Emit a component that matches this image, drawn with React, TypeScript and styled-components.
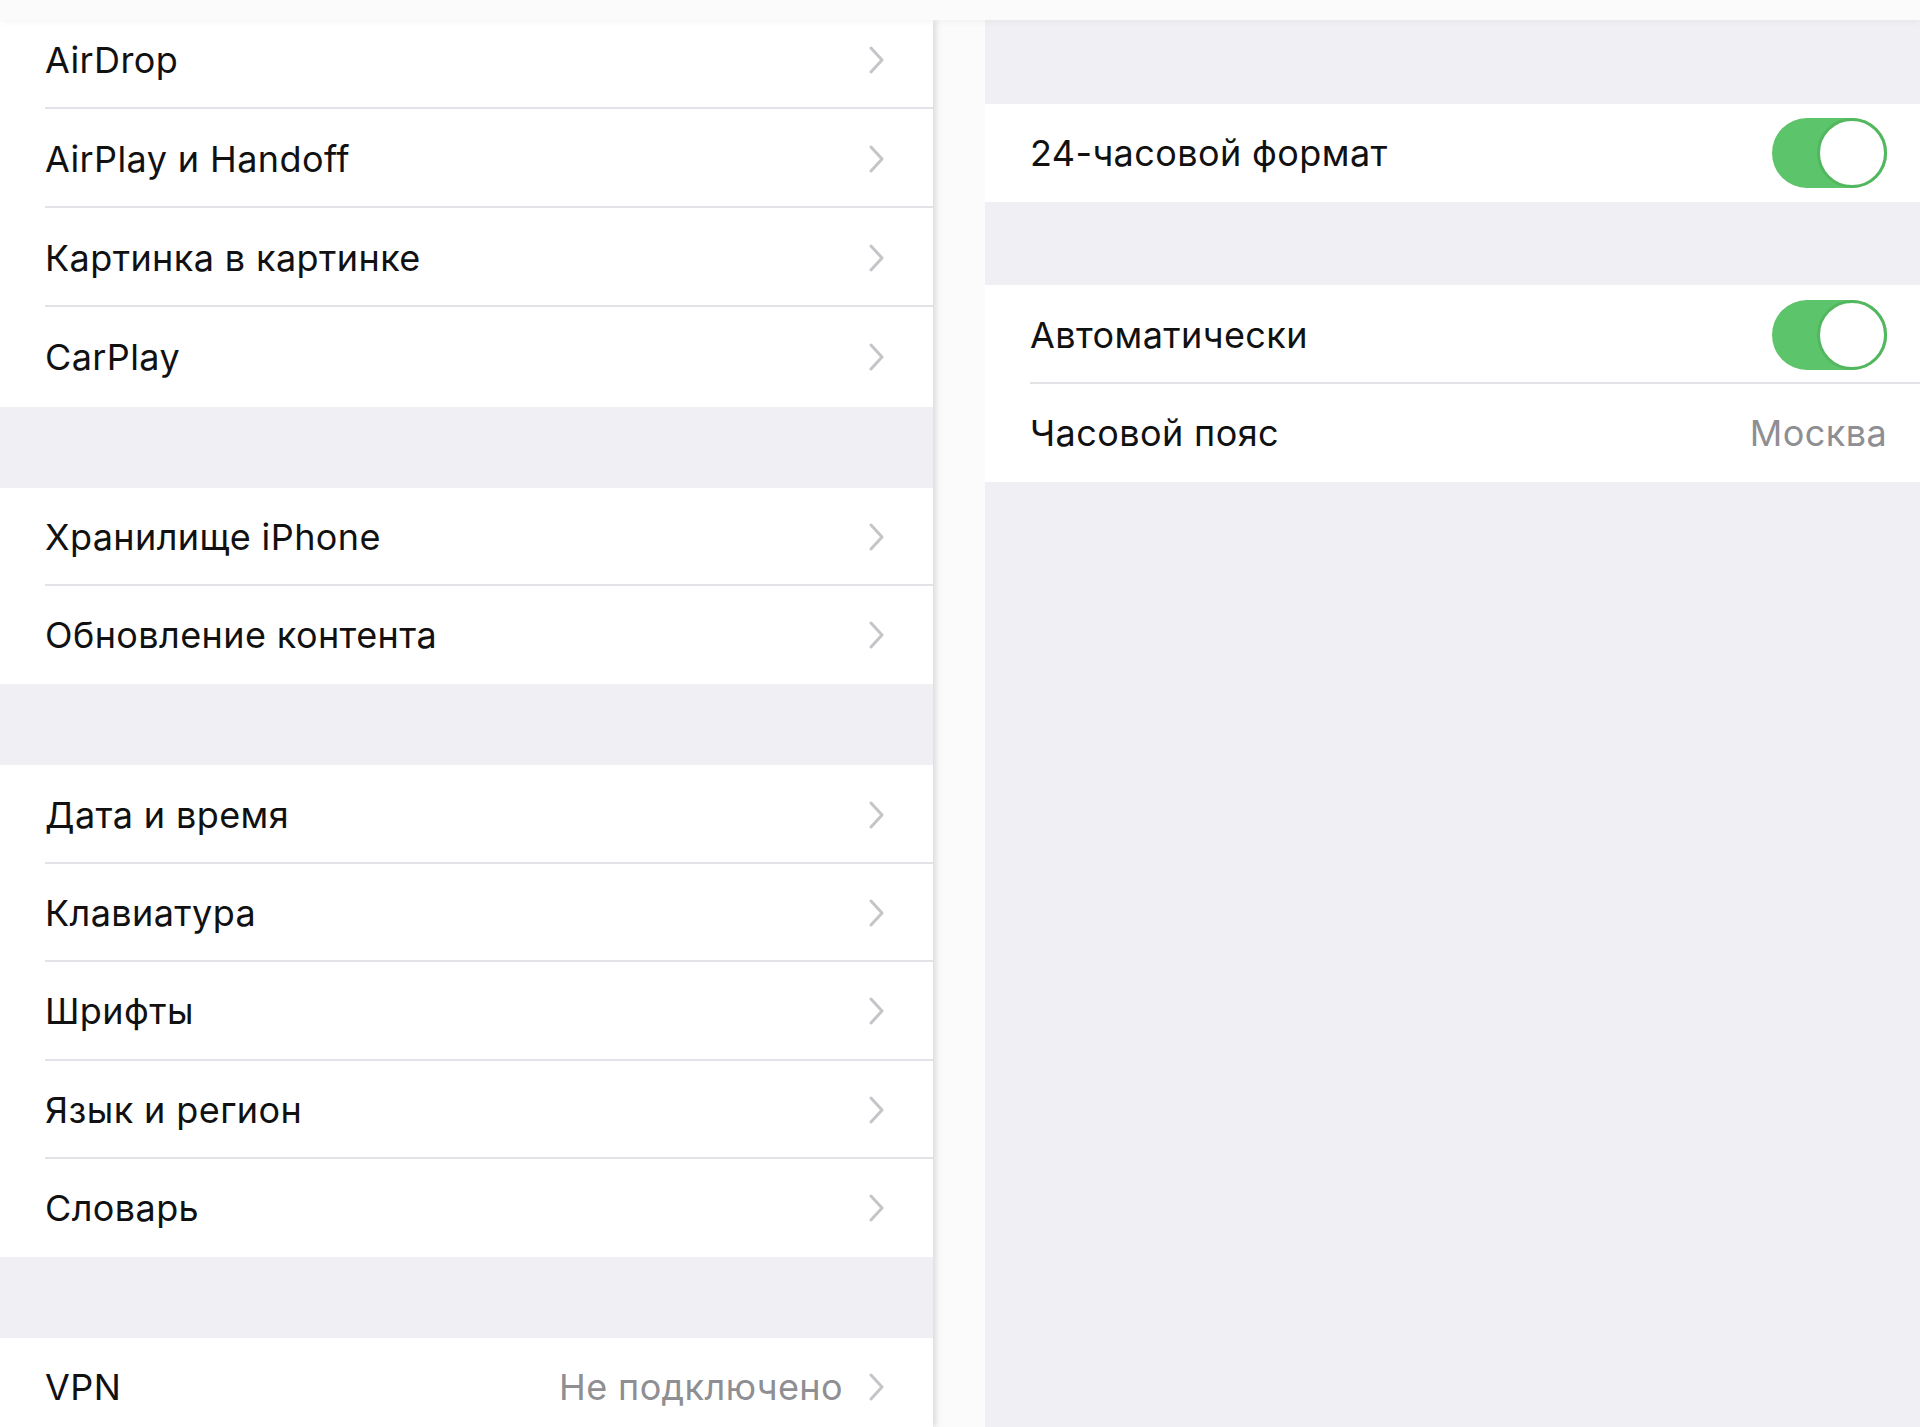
import React from "react";
import styled, { createGlobalStyle } from "styled-components";

const Global = createGlobalStyle`
  html, body { margin: 0; padding: 0; }
  body {
    background: #fbfbfb;
    font-family: Inter, "Liberation Sans", Arial, sans-serif;
    -webkit-font-smoothing: antialiased;
    overflow: hidden;
  }
`;

const Page = styled.div`
  width: 1920px;
  height: 1427px;
  display: flex;
  flex-direction: column;
  overflow: hidden;
  background: #fbfbfb;
`;

const TopStrip = styled.div`
  height: 20px;
  flex: 0 0 20px;
  background: #fbfbfb;
  box-shadow: 0 2px 6px rgba(0, 0, 0, 0.04);
  position: relative;
  z-index: 2;
`;

const Main = styled.div`
  flex: 1;
  display: flex;
  gap: 52px;
  min-height: 0;
`;

const LeftPanel = styled.div`
  width: 933px;
  flex: 0 0 933px;
  background: #efeff4;
  display: flex;
  flex-direction: column;
  overflow: hidden;
  box-shadow: 3px 0 6px rgba(0, 0, 0, 0.13);
  position: relative;
  z-index: 1;
`;

const RightPanel = styled.div`
  flex: 1;
  background: #efeff4;
  display: flex;
  flex-direction: column;
`;

const Group = styled.div`
  background: #ffffff;
  display: flex;
  flex-direction: column;
  flex: 0 0 auto;
`;

const Spacer = styled.div<{ $h: number }>`
  height: ${(p) => p.$h}px;
  flex: 0 0 ${(p) => p.$h}px;
  background: #efeff4;
`;

const Row = styled.div<{ $h?: number; $shift?: number; $last?: boolean; $right?: number }>`
  height: ${(p) => p.$h ?? 98.4}px;
  flex: 0 0 ${(p) => p.$h ?? 98.4}px;
  box-sizing: border-box;
  display: flex;
  align-items: center;
  padding: 0 ${(p) => p.$right ?? 48}px ${(p) => p.$shift ?? 0}px 45px;
  position: relative;
  &::after {
    content: "";
    display: ${(p) => (p.$last ? "none" : "block")};
    position: absolute;
    left: 45px;
    right: 0;
    bottom: 0;
    height: 2px;
    background: #e3e3e7;
  }
`;

const Label = styled.span`
  flex: 1;
  font-size: 36px;
  color: #111111;
  letter-spacing: 0.4px;
  white-space: nowrap;
`;

const Detail = styled.span`
  font-size: 36px;
  color: #8e8e93;
  letter-spacing: 0.4px;
  white-space: nowrap;
`;

const Chevron = styled.svg`
  width: 16px;
  height: 28px;
  margin-left: 26px;
  flex: 0 0 auto;
`;

const Toggle = styled.div`
  width: 115px;
  height: 70px;
  border-radius: 35px;
  background: #5cc46a;
  position: relative;
  flex: 0 0 auto;
`;

const Knob = styled.div`
  position: absolute;
  right: 0;
  top: 0;
  width: 70px;
  height: 70px;
  box-sizing: border-box;
  border-radius: 50%;
  background: #ffffff;
  border: 3px solid #52b75f;
`;

const Arrow = () => (
  <Chevron viewBox="0 0 16 28">
    <polyline points="2,2 13,14 2,26" fill="none" stroke="#c4c4c9" strokeWidth="3" strokeLinecap="round" strokeLinejoin="round" />
  </Chevron>
);

type Item = { label: string; detail?: string };

const NavRow = ({ item, h, shift, last }: { item: Item; h?: number; shift?: number; last?: boolean }) => (
  <Row $h={h} $shift={shift} $last={last}>
    <Label>{item.label}</Label>
    {item.detail && <Detail>{item.detail}</Detail>}
    <Arrow />
  </Row>
);

const groups: Item[][] = [
  [{ label: "AirDrop" }, { label: "AirPlay и Handoff" }, { label: "Картинка в картинке" }, { label: "CarPlay" }],
  [{ label: "Хранилище iPhone" }, { label: "Обновление контента" }],
  [{ label: "Дата и время" }, { label: "Клавиатура" }, { label: "Шрифты" }, { label: "Язык и регион" }, { label: "Словарь" }],
  [{ label: "VPN", detail: "Не подключено" }],
];

const rowHeight = (gi: number, i: number) => {
  if (gi === 0) return i === 0 ? 89 : 99.2;
  return undefined;
};

export default function App() {
  return (
    <Page>
      <Global />
      <TopStrip />
      <Main>
        <LeftPanel>
          {groups.map((g, gi) => (
            <React.Fragment key={gi}>
              {gi > 0 && <Spacer $h={81} />}
              <Group>
                {g.map((item, i) => (
                  <NavRow
                    key={item.label}
                    item={item}
                    h={rowHeight(gi, i)}
                    shift={gi === 0 && i === 0 ? 10 : undefined}
                    last={i === g.length - 1}
                  />
                ))}
              </Group>
            </React.Fragment>
          ))}
        </LeftPanel>
        <RightPanel>
          <Spacer $h={84} />
          <Group>
            <Row $last $right={33}>
              <Label>24-часовой формат</Label>
              <Toggle><Knob /></Toggle>
            </Row>
          </Group>
          <Spacer $h={83} />
          <Group>
            <Row $right={33}>
              <Label>Автоматически</Label>
              <Toggle><Knob /></Toggle>
            </Row>
            <Row $last $right={33}>
              <Label>Часовой пояс</Label>
              <Detail>Москва</Detail>
            </Row>
          </Group>
        </RightPanel>
      </Main>
    </Page>
  );
}
